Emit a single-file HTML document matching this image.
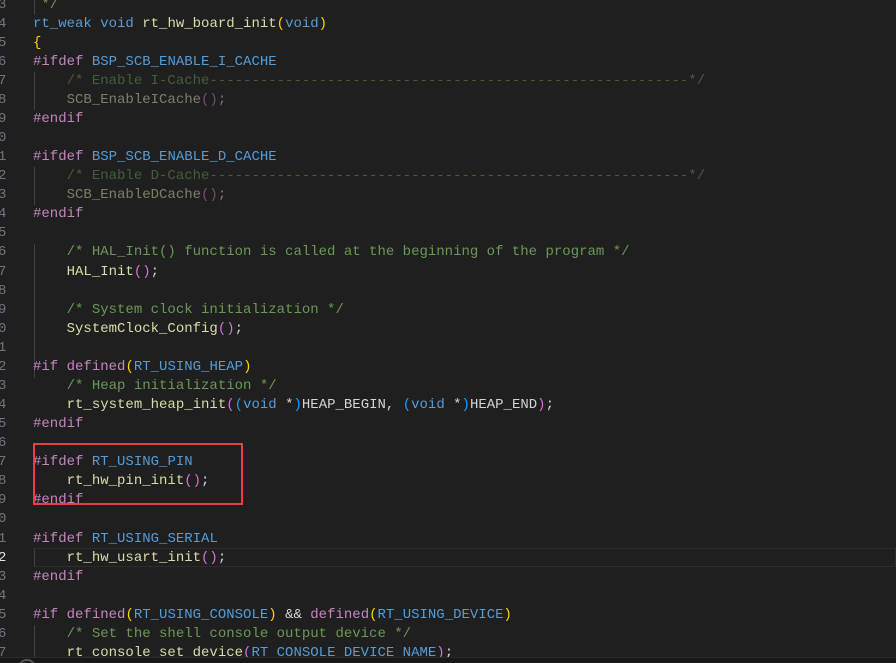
<!DOCTYPE html>
<html style="overflow:hidden;height:663px"><head><style>
body{margin:0;background:#1f1f1f;width:896px;height:663px;overflow:hidden;position:relative;font-family:"Liberation Mono",monospace;font-size:14px;}
.r{position:absolute;left:0;height:19px;line-height:19px;white-space:pre;width:896px;}
.n{position:absolute;left:-2px;color:#6e7681;}
.c{position:absolute;left:33px;color:#d4d4d4;}
.k{color:#569cd6}.f{color:#dcdcaa}.p{color:#c586c0}.m{color:#569cd6}.cm{color:#6a9955}
.y{color:#ffd700}.v{color:#da70d6}.b{color:#179fff}
.dim{opacity:.5}
.g{position:absolute;left:34px;width:1px;background:#404040;}
</style></head><body>
<div class="g" style="top:-4px;height:19px"></div>
<div class="g" style="top:72px;height:38px"></div>
<div class="g" style="top:167px;height:38px"></div>
<div class="g" style="top:244px;height:134px"></div>
<div class="g" style="top:548px;height:19px"></div>
<div class="g" style="top:625px;height:40px"></div>
<div style="position:absolute;left:33px;right:0;top:548px;height:17px;border:1px solid #2c2c2c;border-left:none"></div>
<div id="lines"></div>
<div style="position:absolute;left:33px;top:443px;width:206px;height:58px;border:2px solid #e8403c"></div>
<div style="position:absolute;left:0;top:657px;width:896px;height:6px;background:#181818;border-top:1px solid #2b2b2b;overflow:hidden">
<div style="position:absolute;left:18px;top:1px;width:14px;height:14px;border-radius:50%;border:2px solid #555"></div></div>
<script>
var L=[
' <span class="cm">*/</span>',
'<span class="k">rt_weak</span> <span class="k">void</span> <span class="f">rt_hw_board_init</span><span class="y">(</span><span class="k">void</span><span class="y">)</span>',
'<span class="y">{</span>',
'<span class="p">#ifdef</span> <span class="m">BSP_SCB_ENABLE_I_CACHE</span>',
'<span class="dim">    <span class="cm">/* Enable I-Cache---------------------------------------------------------*/</span></span>',
'<span class="dim">    <span class="f">SCB_EnableICache</span><span class="v">()</span>;</span>',
'<span class="p">#endif</span>',
'',
'<span class="p">#ifdef</span> <span class="m">BSP_SCB_ENABLE_D_CACHE</span>',
'<span class="dim">    <span class="cm">/* Enable D-Cache---------------------------------------------------------*/</span></span>',
'<span class="dim">    <span class="f">SCB_EnableDCache</span><span class="v">()</span>;</span>',
'<span class="p">#endif</span>',
'',
'    <span class="cm">/* HAL_Init() function is called at the beginning of the program */</span>',
'    <span class="f">HAL_Init</span><span class="v">()</span>;',
'',
'    <span class="cm">/* System clock initialization */</span>',
'    <span class="f">SystemClock_Config</span><span class="v">()</span>;',
'',
'<span class="p">#if</span> <span class="p">defined</span><span class="y">(</span><span class="m">RT_USING_HEAP</span><span class="y">)</span>',
'    <span class="cm">/* Heap initialization */</span>',
'    <span class="f">rt_system_heap_init</span><span class="v">(</span><span class="b">(</span><span class="k">void</span> *<span class="b">)</span>HEAP_BEGIN, <span class="b">(</span><span class="k">void</span> *<span class="b">)</span>HEAP_END<span class="v">)</span>;',
'<span class="p">#endif</span>',
'',
'<span class="p">#ifdef</span> <span class="m">RT_USING_PIN</span>',
'    <span class="f">rt_hw_pin_init</span><span class="v">()</span>;',
'<span class="p">#endif</span>',
'',
'<span class="p">#ifdef</span> <span class="m">RT_USING_SERIAL</span>',
'    <span class="f">rt_hw_usart_init</span><span class="v">()</span>;',
'<span class="p">#endif</span>',
'',
'<span class="p">#if</span> <span class="p">defined</span><span class="y">(</span><span class="m">RT_USING_CONSOLE</span><span class="y">)</span> &amp;&amp; <span class="p">defined</span><span class="y">(</span><span class="m">RT_USING_DEVICE</span><span class="y">)</span>',
'    <span class="cm">/* Set the shell console output device */</span>',
'    <span class="f">rt_console_set_device</span><span class="v">(</span><span class="m">RT_CONSOLE_DEVICE_NAME</span><span class="v">)</span>;'
];
var h='';
for(var i=0;i<L.length;i++){
 var t=(-4.5+19.07*i).toFixed(1);
 h+='<div class="r" style="top:'+t+'px"><span class="n"'+(i==29?' style="color:#e0e0e0"':'')+'>'+((3+i)%10)+'</span><span class="c">'+L[i]+'</span></div>';
}
document.getElementById('lines').innerHTML=h;
</script>
</body></html>
